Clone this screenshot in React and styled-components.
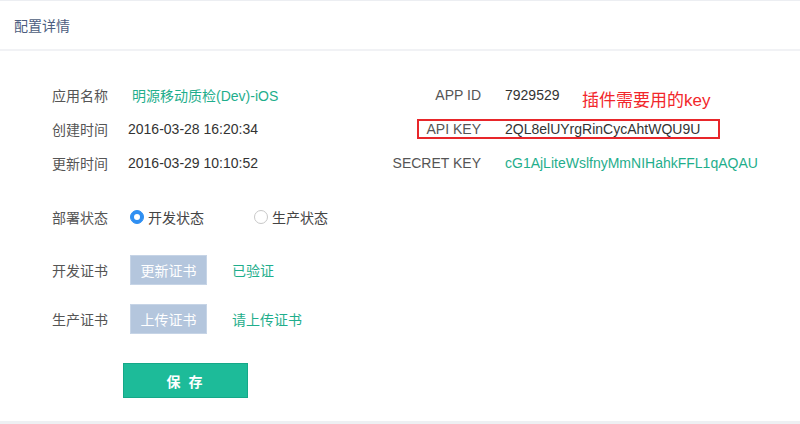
import React from 'react';
import styled, { createGlobalStyle } from 'styled-components';

const GlobalStyle = createGlobalStyle`
  html, body {
    margin: 0;
    padding: 0;
    background: #fff;
  }

  body {
    font-family: "Liberation Sans", "Noto Sans CJK SC", sans-serif;
    font-size: 14px;
    color: #333;
  }
`;

const Page = styled.div`
  display: flex;
  flex-direction: column;
  height: 424px;
  overflow: hidden;
  border-top: 1px solid #eceef2;
  box-sizing: border-box;
`;

const Header = styled.div`
  display: flex;
  align-items: center;
  flex-shrink: 0;
  height: 48px;
  padding-left: 14px;
  border-bottom: 2px solid #f1f2f5;
  color: #4d5e80;
  font-size: 14px;
`;

const Content = styled.div`
  flex: 1;
  padding: 27px 0 0 52px;
`;

const Footer = styled.div`
  flex-shrink: 0;
  height: 3px;
  background: #eef0f3;
`;

const InfoGrid = styled.div`
  display: grid;
  grid-template-columns: 76px 252px 125px auto;
  grid-auto-rows: 34px;
  align-items: center;
`;

const Label = styled.span`
  color: #555;
  white-space: nowrap;
`;

const KeyLabel = styled.span`
  color: #555;
  text-align: right;
  padding-right: 24px;
  white-space: nowrap;
`;

const Value = styled.span`
  color: ${(p) => (p.$green ? '#1fae8c' : '#333')};
  margin-left: ${(p) => (p.$shift ? '4px' : '0')};
  white-space: nowrap;
`;

const KeyValue = styled.span`
  position: relative;
  color: ${(p) => (p.$green ? '#1fae8c' : '#333')};
  white-space: nowrap;
`;

const Note = styled.span`
  position: absolute;
  left: 77px;
  top: -1px;
  color: #f2262b;
  font-size: 17px;
`;

const Highlight = styled.span`
  position: absolute;
  left: -88px;
  top: -2px;
  width: 299px;
  height: 16px;
  border: 2px solid #e8262a;
  pointer-events: none;
`;

const FormRow = styled.div`
  display: grid;
  grid-template-columns: 78px auto;
  align-items: center;
  margin-top: ${(p) => p.$top}px;
`;

const Options = styled.div`
  display: flex;
  align-items: center;
  height: 20px;
`;

const Radio = styled.label`
  display: flex;
  align-items: center;
  gap: 4px;
  width: 124px;
  color: #444;
`;

const Dot = styled.span`
  position: relative;
  width: 14px;
  height: 14px;
  box-sizing: border-box;
  border-radius: 50%;
  background: ${(p) => (p.$on ? '#2f8ff2' : '#fff')};
  border: 1px solid ${(p) => (p.$on ? '#2f8ff2' : '#c8c8c8')};

  &::after {
    content: '';
    display: ${(p) => (p.$on ? 'block' : 'none')};
    position: absolute;
    left: 3px;
    top: 3px;
    width: 6px;
    height: 6px;
    border-radius: 50%;
    background: #fff;
  }
`;

const CertCell = styled.div`
  display: flex;
  align-items: center;
  gap: 25px;
`;

const CertButton = styled.button`
  width: 77px;
  height: 30px;
  padding: 0;
  border: 1px solid #c6d4e6;
  background: #b4c6dd;
  color: #fff;
  font-family: inherit;
  font-size: 14px;
`;

const StatusText = styled.span`
  color: #1fae8c;
`;

const SaveButton = styled.button`
  display: block;
  width: 125px;
  height: 35px;
  margin: 29px 0 0 71px;
  padding: 0;
  border: 1px solid #15a888;
  background: #1dbb99;
  color: #fff;
  font-family: inherit;
  font-size: 14px;
  font-weight: bold;
  letter-spacing: 2px;
`;

export default function App() {
  return (
    <>
      <GlobalStyle />
      <Page>
        <Header>配置详情</Header>
        <Content>
          <InfoGrid>
            <Label>应用名称</Label>
            <Value $green $shift>明源移动质检(Dev)-iOS</Value>
            <KeyLabel>APP ID</KeyLabel>
            <KeyValue>
              7929529
              <Note>插件需要用的key</Note>
            </KeyValue>

            <Label>创建时间</Label>
            <Value>2016-03-28 16:20:34</Value>
            <KeyLabel>API KEY</KeyLabel>
            <KeyValue>
              2QL8elUYrgRinCycAhtWQU9U
              <Highlight />
            </KeyValue>

            <Label>更新时间</Label>
            <Value>2016-03-29 10:10:52</Value>
            <KeyLabel>SECRET KEY</KeyLabel>
            <KeyValue $green>cG1AjLiteWslfnyMmNIHahkFFL1qAQAU</KeyValue>
          </InfoGrid>

          <FormRow $top={27}>
            <Label>部署状态</Label>
            <Options>
              <Radio>
                <Dot $on />
                开发状态
              </Radio>
              <Radio>
                <Dot />
                生产状态
              </Radio>
            </Options>
          </FormRow>

          <FormRow $top={28}>
            <Label>开发证书</Label>
            <CertCell>
              <CertButton>更新证书</CertButton>
              <StatusText>已验证</StatusText>
            </CertCell>
          </FormRow>

          <FormRow $top={19}>
            <Label>生产证书</Label>
            <CertCell>
              <CertButton>上传证书</CertButton>
              <StatusText>请上传证书</StatusText>
            </CertCell>
          </FormRow>

          <SaveButton>保 存</SaveButton>
        </Content>
        <Footer />
      </Page>
    </>
  );
}
